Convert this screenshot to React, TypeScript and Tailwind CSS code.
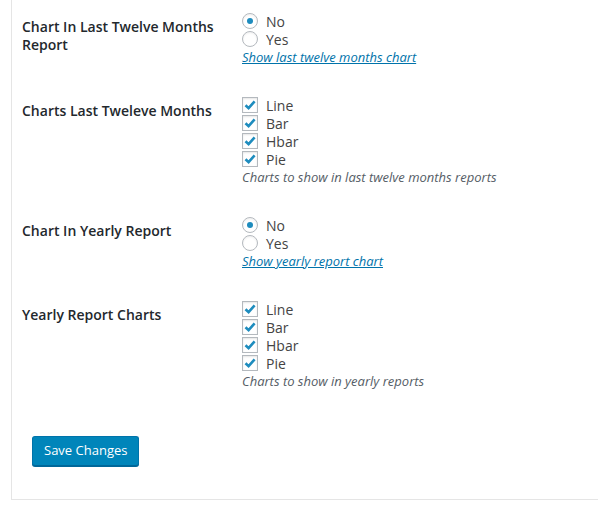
const font = { fontFamily: '"Open Sans", "Noto Sans", sans-serif' }

function Radio({ checked, label }: { checked?: boolean; label: string }) {
  return (
    <label className="flex h-[18px] items-center">
      <span className="mr-[8px] flex h-[16px] w-[16px] items-center justify-center rounded-full border border-[#b4b9be] bg-white shadow-[inset_0_1px_2px_rgba(0,0,0,0.07)]">
        {checked && <span className="h-[6px] w-[6px] rounded-full bg-[#1e8cbe]" />}
      </span>
      <span className="text-[14px] text-[#444]">{label}</span>
    </label>
  )
}

function Check({ label }: { label: string }) {
  return (
    <label className="flex h-[18px] items-center">
      <span className="mr-[8px] flex h-[16px] w-[16px] items-center justify-center border border-[#b4b9be] bg-white shadow-[inset_0_1px_2px_rgba(0,0,0,0.1)]">
        <svg width="12" height="12" viewBox="0 0 12 12">
          <path d="M1.5 6.2 L4.6 9.2 L10.6 2.4" fill="none" stroke="#1e8cbe" strokeWidth="2.6" />
        </svg>
      </span>
      <span className="text-[14px] text-[#444]">{label}</span>
    </label>
  )
}

function Row({ label, children }: { label: string; children: React.ReactNode }) {
  return (
    <div className="flex py-[15px]">
      <div className="w-[220px] shrink-0 pr-[10px] pt-[6px] text-[14px] font-semibold leading-[18px] text-[#23282d]">
        {label}
      </div>
      <div className="flex flex-col">{children}</div>
    </div>
  )
}

function Desc({ children }: { children: React.ReactNode }) {
  return <p className="h-[18px] text-[13px] leading-[18px] italic text-[#555d66]">{children}</p>
}

export default function App() {
  return (
    <div className="min-h-[515px] bg-white" style={font}>
      <div className="ml-[11px] border-b border-l border-[#e5e5e5] pb-[33px] pl-[10px]">
        <div className="-mt-[3px]">
          <Row label="Chart In Last Twelve Months Report">
            <Radio checked label="No" />
            <Radio label="Yes" />
            <Desc>
              <a href="#" className="text-[#0073aa] underline">Show last twelve months chart</a>
            </Desc>
          </Row>
          <Row label="Charts Last Tweleve Months">
            <Check label="Line" />
            <Check label="Bar" />
            <Check label="Hbar" />
            <Check label="Pie" />
            <Desc>Charts to show in last twelve months reports</Desc>
          </Row>
          <Row label="Chart In Yearly Report">
            <Radio checked label="No" />
            <Radio label="Yes" />
            <Desc>
              <a href="#" className="text-[#0073aa] underline">Show yearly report chart</a>
            </Desc>
          </Row>
          <Row label="Yearly Report Charts">
            <Check label="Line" />
            <Check label="Bar" />
            <Check label="Hbar" />
            <Check label="Pie" />
            <Desc>Charts to show in yearly reports</Desc>
          </Row>
        </div>
        <div className="mt-[31px] pl-[10px]">
          <button className="h-[30px] rounded-[3px] border border-[#0073aa] border-b-[#006799] bg-[#0085ba] px-[11px] text-[13px] text-white shadow-[0_1px_0_#006799]">
            Save Changes
          </button>
        </div>
      </div>
    </div>
  )
}
